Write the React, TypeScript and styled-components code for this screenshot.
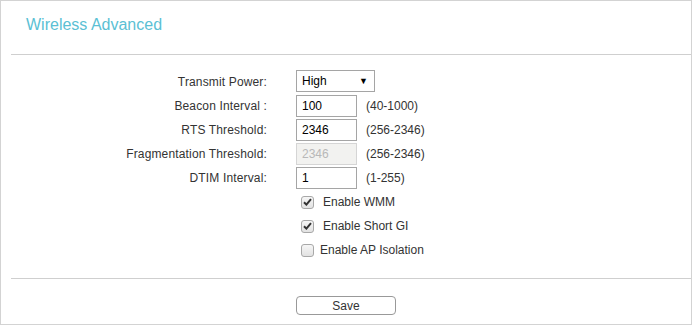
import React from 'react';
import styled, { createGlobalStyle } from 'styled-components';

const GlobalStyle = createGlobalStyle`
  html, body {
    margin: 0;
    padding: 0;
    background: #fff;
  }
  body {
    font-family: "Liberation Sans", Arial, sans-serif;
    font-size: 12px;
    color: #333;
  }
`;

const Panel = styled.div`
  box-sizing: border-box;
  width: 692px;
  height: 325px;
  border: 1px solid #d3d3d3;
  background: #fff;
  display: flex;
  flex-direction: column;
`;

const Title = styled.h2`
  margin: 14px 0 0 25px;
  height: 20px;
  line-height: 20px;
  font-size: 16px;
  font-weight: normal;
  color: #5bbfd4;
`;

const Divider = styled.hr<{ $top: number }>`
  margin: ${p => p.$top}px 0 0 10px;
  border: none;
  border-top: 1px solid #cfcfcf;
  height: 0;
`;

const Form = styled.div`
  display: grid;
  grid-template-columns: 266px auto;
  grid-auto-rows: 24px;
  column-gap: 29px;
  margin-top: 15px;
`;

const Label = styled.div`
  text-align: right;
  line-height: 24px;
  white-space: nowrap;
  letter-spacing: 0.15px;
  color: #333;
`;

const Field = styled.div<{ $top?: boolean }>`
  display: flex;
  align-items: ${p => (p.$top ? 'flex-start' : 'center')};
  gap: 9px;
`;

const Select = styled.div`
  box-sizing: border-box;
  width: 79px;
  height: 22px;
  border: 1px solid #a5a5a5;
  display: flex;
  align-items: center;
  justify-content: space-between;
  padding: 0 6px 0 5px;
  font-size: 12px;
  color: #000;
  background: #fff;

  span {
    font-size: 9px;
  }
`;

const Input = styled.input`
  box-sizing: border-box;
  width: 61px;
  height: 22px;
  border: 1px solid #a5a5a5;
  padding: 0 5px;
  font-family: "Liberation Sans", Arial, sans-serif;
  font-size: 12px;
  color: #000;
  background: #fff;
  outline: none;

  &:disabled {
    border-color: #d5d5d5;
    background: #f2f2f0;
    color: #b8b8b8;
  }
`;

const Range = styled.span`
  color: #333;
`;

const CheckRow = styled.label<{ $checked: boolean }>`
  grid-column: 2;
  display: flex;
  align-items: center;
  gap: ${p => (p.$checked ? 9 : 6)}px;
  padding-left: 5px;
  color: #333;
`;

const Box = styled.span`
  box-sizing: border-box;
  width: 13px;
  height: 13px;
  border: 1px solid #a8a8a8;
  border-radius: 3px;
  background: linear-gradient(#f6f6f6, #e2e2e2);
  display: flex;
  align-items: center;
  justify-content: center;
`;

const Footer = styled.div`
  display: flex;
  padding-left: 295px;
  margin-top: 17px;
`;

const SaveButton = styled.button`
  box-sizing: border-box;
  width: 100px;
  height: 19px;
  border: 1px solid #999;
  border-radius: 4px;
  background: #fff;
  font-family: "Liberation Sans", Arial, sans-serif;
  font-size: 12px;
  color: #333;
  padding: 0;
`;

const Check = ({ checked }: { checked: boolean }) => (
  <Box>
    {checked && (
      <svg width="9" height="8" viewBox="0 0 9 8">
        <path d="M1 4.2 L3.4 6.6 L8 1.2" stroke="#333" strokeWidth="2" fill="none" />
      </svg>
    )}
  </Box>
);

const fields = [
  { label: 'Beacon Interval :', value: '100', range: '(40-1000)' },
  { label: 'RTS Threshold:', value: '2346', range: '(256-2346)' },
  { label: 'Fragmentation Threshold:', value: '2346', range: '(256-2346)', disabled: true },
  { label: 'DTIM Interval:', value: '1', range: '(1-255)' },
];

const options = [
  { label: 'Enable WMM', checked: true },
  { label: 'Enable Short GI', checked: true },
  { label: 'Enable AP Isolation', checked: false },
];

export default function App() {
  return (
    <>
      <GlobalStyle />
      <Panel>
        <Title>Wireless Advanced</Title>
        <Divider $top={19} />
        <Form>
          <Label>Transmit Power:</Label>
          <Field $top>
            <Select>
              High<span>▼</span>
            </Select>
          </Field>
          {fields.map(f => (
            <React.Fragment key={f.label}>
              <Label>{f.label}</Label>
              <Field>
                <Input defaultValue={f.value} disabled={f.disabled} />
                <Range>{f.range}</Range>
              </Field>
            </React.Fragment>
          ))}
          {options.map(o => (
            <CheckRow key={o.label} $checked={o.checked}>
              <Check checked={o.checked} />
              {o.label}
            </CheckRow>
          ))}
        </Form>
        <Divider $top={16} />
        <Footer>
          <SaveButton>Save</SaveButton>
        </Footer>
      </Panel>
    </>
  );
}
